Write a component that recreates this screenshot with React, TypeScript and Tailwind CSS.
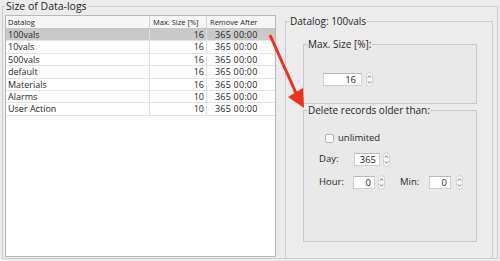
import React from "react";

const rows = [
  { name: "100vals", size: "16", sel: true },
  { name: "10vals", size: "16" },
  { name: "500vals", size: "16" },
  { name: "default", size: "16" },
  { name: "Materials", size: "16" },
  { name: "Alarms", size: "10" },
  { name: "User Action", size: "10" },
];

function Stepper() {
  return (
    <svg width="7" height="15" viewBox="0 0 7 15" className="shrink-0">
      <rect x="0.5" y="0.5" width="6" height="14" rx="3" fill="#f7f7f7" stroke="#d2d2d2" />
      <path d="M2 5.5 L3.5 3.8 L5 5.5" fill="none" stroke="#6a6a6a" strokeWidth="0.9" />
      <path d="M2 9.5 L3.5 11.2 L5 9.5" fill="none" stroke="#6a6a6a" strokeWidth="0.9" />
    </svg>
  );
}

function NumField({ value, w, pr }: { value: string; w: string; pr: string }) {
  return (
    <div
      className={`${w} ${pr} h-[13px] shrink-0 bg-white border border-[#cfcfcf] border-t-[#b9b9b9] text-right text-[9.5px] leading-[11px]`}
    >
      {value}
    </div>
  );
}

export default function App() {
  return (
    <div className="relative w-[500px] h-[261px] overflow-hidden bg-[#ececec] font-['Open_Sans',sans-serif] text-[#262626]">
      <fieldset className="ml-[2px] w-[496px] h-[259px] border border-[#cdcdcd] px-[2px]">
        <legend className="px-[1px] text-[10.5px] leading-[13px]">Size of Data-logs</legend>
        <div className="mt-[2px] flex items-start gap-[9px]">
          {/* table */}
          <div className="w-[271px] h-[242px] shrink-0 bg-white border border-[#b8b8b8]">
            <div className="grid grid-cols-[143px_57px_69px] h-[13px] border-b border-[#c6c6c6] bg-[#f6f6f6] text-[7.5px] leading-[12px]">
              <div className="pl-[2px]">Datalog</div>
              <div className="pl-[3px] border-l border-[#d4d4d4]">Max. Size [%]</div>
              <div className="pl-[3px] border-l border-[#d4d4d4]">Remove After</div>
            </div>
            {rows.map((r) => (
              <div
                key={r.name}
                className={`grid grid-cols-[143px_57px_69px] h-[12.4px] text-[9px] leading-[11.4px] border-b border-[#e4e4e4] ${
                  r.sel ? "bg-[#c9c9c9]" : ""
                }`}
              >
                <div className="pl-[2px]">{r.name}</div>
                <div className="pr-[2px] text-right border-l border-[#e0e0e0]">{r.size}</div>
                <div className="pl-[8px] border-l border-[#e0e0e0] tracking-[0.2px]">365 00:00</div>
              </div>
            ))}
          </div>

          {/* right panel */}
          <fieldset className="w-[208px] h-[244px] shrink-0 border border-[#cdcdcd]">
            <legend className="ml-[3px] px-[1px] text-[10px] leading-[13px]">Datalog: 100vals</legend>
            <div className="ml-[17px] w-[174px] flex flex-col">
              <fieldset className="mt-[10px] h-[66px] border border-[#c8c8c8] bg-[#e9e9e9]">
                <legend className="ml-[3px] px-[1px] text-[10px] leading-[13px]">Max. Size [%]:</legend>
                <div className="mt-[21px] ml-[19px] flex items-center gap-[4px]">
                  <NumField value="16" w="w-[39px]" pr="pr-[5px]" />
                  <Stepper />
                </div>
              </fieldset>
              <fieldset className="mt-0 h-[138px] border border-[#c8c8c8] bg-[#e9e9e9]">
                <legend className="ml-[3px] px-[1px] text-[10px] leading-[13px]">Delete records older than:</legend>
                <div className="mt-[16px] ml-[21px] flex items-center gap-[4px] h-[10px]">
                  <div className="w-[9px] h-[9px] rounded-[2px] bg-white border border-[#b5b5b5]" />
                  <span className="text-[9.5px] leading-[10px]">unlimited</span>
                </div>
                <div className="mt-[10px] ml-[15px] flex items-center h-[13px] text-[9.5px]">
                  <span className="w-[35px]">Day:</span>
                  <NumField value="365" w="w-[26px]" pr="pr-[3px]" />
                  <span className="w-[3px]" />
                  <Stepper />
                </div>
                <div className="mt-[10px] ml-[15px] flex items-center h-[13px] text-[9.5px]">
                  <span className="w-[34px]">Hour:</span>
                  <NumField value="0" w="w-[22px]" pr="pr-[3px]" />
                  <span className="w-[3px]" />
                  <Stepper />
                  <span className="ml-[15px] w-[29px]">Min:</span>
                  <NumField value="0" w="w-[22px]" pr="pr-[3px]" />
                  <span className="w-[5px]" />
                  <Stepper />
                </div>
              </fieldset>
            </div>
          </fieldset>
        </div>
      </fieldset>

      <svg className="absolute inset-0 pointer-events-none" width="500" height="261" viewBox="0 0 500 261">
        <line x1="270" y1="35" x2="296" y2="93" stroke="#f0301c" strokeWidth="3" />
        <polygon points="288,97 303,88 304,108" fill="#f0301c" />
      </svg>
    </div>
  );
}
